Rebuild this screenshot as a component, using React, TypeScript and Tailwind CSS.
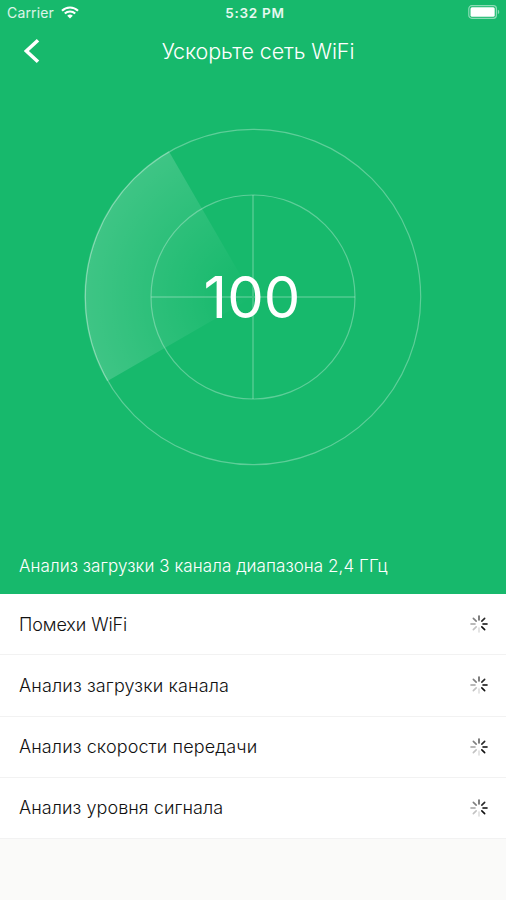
const tasks = [
  { label: 'Помехи WiFi', spacing: 'tracking-[-0.1px]' },
  { label: 'Анализ загрузки канала', spacing: 'tracking-[0.14px]' },
  { label: 'Анализ скорости передачи', spacing: 'tracking-[0.1px]' },
  { label: 'Анализ уровня сигнала', spacing: 'tracking-[0.06px]' },
];

// Petal shades, clockwise from the top
const petals = ['#606060', '#292929', '#080808', '#101010', '#dedede', '#c2c2c2', '#a3a3a3', '#808080'];

function Spinner() {
  return (
    <svg width="18" height="18" viewBox="-9 -9 18 18" className="-mt-px shrink-0">
      {petals.map((color, i) => (
        <line
          key={color}
          x1="0"
          y1="-4"
          x2="0"
          y2="-8"
          stroke={color}
          strokeWidth="1.6"
          strokeLinecap="round"
          transform={`rotate(${i * 45})`}
        />
      ))}
    </svg>
  );
}

function StatusBar() {
  return (
    <div className="grid h-[26px] grid-cols-[1fr_auto_1fr] items-center pl-[7px] pr-[6px] text-[14px] leading-[26px]">
      <div className="flex items-center gap-[7px]">
        <span className="tracking-[0.15px] text-white/85">Carrier</span>
        <svg width="18" height="13" viewBox="0 0 18 13" fill="none" stroke="white" strokeWidth="2.1" className="-mt-[2px]">
          <path d="M1 4.7a11.5 11.5 0 0 1 16 0" />
          <path d="M3.8 7.6a7.4 7.4 0 0 1 10.4 0" />
          <path d="M6.2 9.8a4 4 0 0 1 5.6 0L9 12.6Z" fill="white" stroke="none" />
        </svg>
      </div>
      <span className="pl-[3px] text-[13.5px] font-semibold tracking-[0.7px] text-white/90">5:32 PM</span>
      <svg width="32" height="14" viewBox="0 0 32 14" className="-mt-[2px] justify-self-end">
        <rect x="0.8" y="0.7" width="27.6" height="12.6" rx="3" fill="none" stroke="white" strokeOpacity="0.5" strokeWidth="1.2" />
        <rect x="2.5" y="2.3" width="24.2" height="9.4" rx="1.5" fill="white" />
        <path d="M29.8 4.8c1.9.6 1.9 3.8 0 4.4Z" fill="white" fillOpacity="0.5" />
      </svg>
    </div>
  );
}

function Radar() {
  return (
    <div className="mt-[51px] grid place-items-center">
      <svg width="340" height="340" viewBox="-170 -170 340 340" fill="none" className="col-start-1 row-start-1">
        <defs>
          <radialGradient id="sweep" gradientUnits="userSpaceOnUse" cx="0" cy="0" r="168">
            <stop offset="0" stopColor="white" stopOpacity="0" />
            <stop offset="0.2" stopColor="white" stopOpacity="0.02" />
            <stop offset="1" stopColor="white" stopOpacity="0.17" />
          </radialGradient>
        </defs>
        <path d="M0 0L-84 -145.5A168 168 0 0 0 -145.5 84Z" fill="url(#sweep)" />
        <circle r="167.7" stroke="white" strokeOpacity="0.3" strokeWidth="1.2" />
        <path d="M-84 -145.5A168 168 0 0 0 -145.5 84" stroke="white" strokeOpacity="0.15" strokeWidth="1.4" />
        <circle r="102" stroke="white" strokeOpacity="0.3" strokeWidth="1.2" />
        <path d="M0 -102V102M-102 0H102" stroke="white" strokeOpacity="0.19" strokeWidth="2" />
      </svg>
      <span className="z-10 col-start-1 row-start-1 pr-[2px] text-[58px] leading-[60px] tracking-[0.1px]">100</span>
    </div>
  );
}

export default function App() {
  return (
    <div className="flex h-[900px] w-[506px] flex-col overflow-hidden bg-[#fafaf9] font-['Inter','Liberation_Sans',sans-serif] text-white">
      <header className="flex h-[594px] shrink-0 flex-col bg-[#17b96c]">
        <StatusBar />
        <div className="grid h-[50px] grid-cols-[48px_1fr_48px] items-center">
          <svg width="16" height="26" viewBox="0 0 16 26" fill="none" className="ml-[24px]">
            <path d="M14 2.2L2.3 13L14 23.8" stroke="white" strokeWidth="3.6" />
          </svg>
          <h1 className="pl-[10px] text-center text-[21.5px] font-light leading-[30px] tracking-[-0.1px]">Ускорьте сеть WiFi</h1>
        </div>
        <Radar />
        <p className="mb-[16px] mt-auto pl-[19px] text-[17px] font-light leading-[24px] tracking-[0.07px]">
          Анализ загрузки 3 канала диапазона 2,4 ГГц
        </p>
      </header>
      <ul className="bg-white text-[#111]">
        {tasks.map((task) => (
          <li key={task.label} className="flex h-[61.25px] items-center justify-between border-b border-[#f2f2f2] pl-[19px] pr-[18px] pt-px">
            <span className={`text-[18px] font-light leading-[24px] ${task.spacing}`}>{task.label}</span>
            <Spinner />
          </li>
        ))}
      </ul>
    </div>
  );
}
